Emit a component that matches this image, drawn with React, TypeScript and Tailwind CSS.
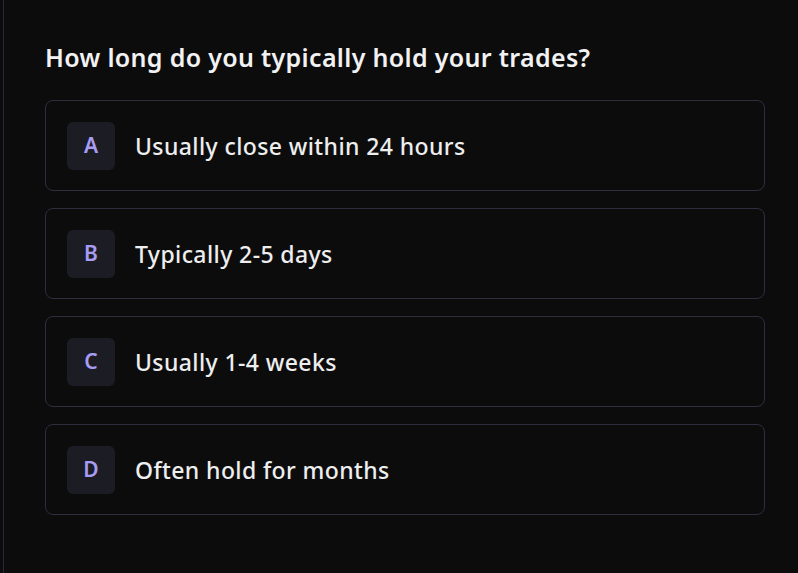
const options = [
  { key: 'A', label: 'Usually close within 24 hours' },
  { key: 'B', label: 'Typically 2-5 days' },
  { key: 'C', label: 'Usually 1-4 weeks' },
  { key: 'D', label: 'Often hold for months' },
]

export default function App() {
  return (
    <div
      className="min-h-[573px] w-full bg-[#0c0c0d] pl-[3px]"
      style={{ fontFamily: '"Noto Sans", "Open Sans", sans-serif' }}
    >
      <div className="min-h-[573px] border-l border-[#2a2938] pl-[41px] pt-[40px]">
        <div className="w-[720px]">
          <h2 className="text-[25px] leading-[34px] font-semibold tracking-[0.33px] text-[#f2f2f3]">
            How long do you typically hold your trades?
          </h2>
          <div className="mt-[26px] flex flex-col gap-[17px]">
            {options.map((o) => (
              <button
                key={o.key}
                className="flex items-center gap-5 rounded-lg border border-[#2f2e3f] bg-[#0c0c0d] pl-[21px] pr-5 pt-[21px] pb-[20px] text-left"
              >
                <span className="flex h-12 w-12 items-center justify-center rounded-md bg-[#1c1c24] text-[21px] font-semibold text-[#a89cf2]">
                  {o.key}
                </span>
                <span className="text-[23px] font-medium tracking-[0.4px] text-[#eeeeef]">{o.label}</span>
              </button>
            ))}
          </div>
        </div>
      </div>
    </div>
  )
}
